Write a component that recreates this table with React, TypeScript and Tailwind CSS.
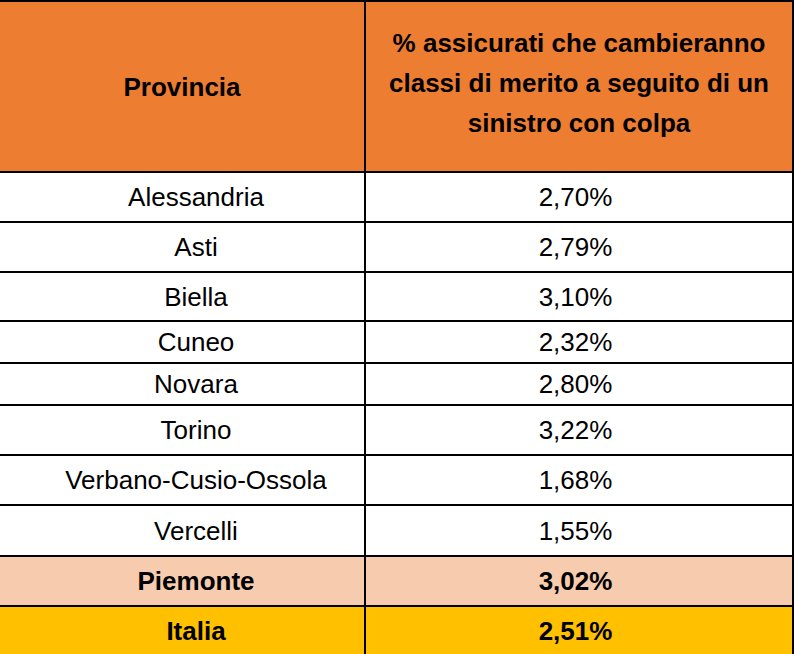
const rows: { name: string; value: string; h: string }[] = [
  { name: "Alessandria", value: "2,70%", h: "h-[50px]" },
  { name: "Asti", value: "2,79%", h: "h-[50px]" },
  { name: "Biella", value: "3,10%", h: "h-[49px]" },
  { name: "Cuneo", value: "2,32%", h: "h-[42px]" },
  { name: "Novara", value: "2,80%", h: "h-[42px]" },
  { name: "Torino", value: "3,22%", h: "h-[50px]" },
  { name: "Verbano-Cusio-Ossola", value: "1,68%", h: "h-[50px]" },
  { name: "Vercelli", value: "1,55%", h: "h-[51px]" },
];

function Row({
  name,
  value,
  h,
  className = "bg-white",
  bold = false,
}: {
  name: string;
  value: string;
  h: string;
  className?: string;
  bold?: boolean;
}) {
  return (
    <div className={`grid grid-cols-[366px_1fr] border-b-2 border-black ${h} ${className} ${bold ? "font-bold" : ""}`}>
      <div className="flex items-center justify-center border-r-2 border-black pl-[28px]">{name}</div>
      <div className="flex items-center justify-center border-r-2 border-black pr-[7px]">{value}</div>
    </div>
  );
}

export default function App() {
  return (
    <div className="w-[794px] h-[654px] overflow-hidden bg-white text-black text-[26px] leading-[30px] font-['Liberation_Sans',Arial,sans-serif]">
      <div className="grid grid-cols-[366px_1fr] h-[173px] border-t-2 border-b-2 border-black bg-[#ED7D31] font-bold">
        <div className="flex items-center justify-center border-r-2 border-black">Provincia</div>
        <div className="flex items-center justify-center border-r-2 border-black pb-[8px] text-center leading-[40px]">
          <p>
            % assicurati che cambieranno
            <br />
            classi di merito a seguito di un
            <br />
            sinistro con colpa
          </p>
        </div>
      </div>
      {rows.map((r) => (
        <Row key={r.name} {...r} />
      ))}
      <Row name="Piemonte" value="3,02%" h="h-[50px]" className="bg-[#F7CBAE]" bold />
      <Row name="Italia" value="2,51%" h="h-[50px]" className="bg-[#FFC000]" bold />
    </div>
  );
}
